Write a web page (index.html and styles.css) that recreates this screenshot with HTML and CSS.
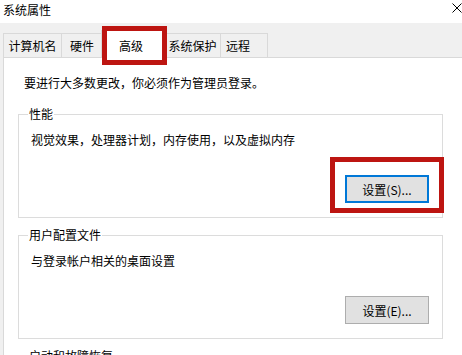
FILE: index.html
```html
<!DOCTYPE html>
<html lang="zh-CN">
<head>
    <meta charset="UTF-8">
    <title>系统属性</title>
    <link rel="stylesheet" href="styles.css">
</head>
<body>
    <div class="window">
        <div class="titlebar">
            <span class="title">系统属性</span>
            <svg class="close" width="10" height="10" viewBox="0 0 10 10">
                <path d="M0.5 0.5 L9.5 9.5 M9.5 0.5 L0.5 9.5" stroke="#000" stroke-width="1" fill="none"/>
            </svg>
        </div>

        <div class="tabs">
            <div class="tab tab-name">计算机名</div>
            <div class="tab tab-hw">硬件</div>
            <div class="tab tab-adv active">高级</div>
            <div class="tab tab-prot">系统保护</div>
            <div class="tab tab-remote">远程</div>
        </div>

        <div class="panel">
            <p class="notice">要进行大多数更改，你必须作为管理员登录。</p>

            <fieldset class="group">
                <legend>性能</legend>
                <p class="group-text">视觉效果，处理器计划，内存使用，以及虚拟内存</p>
                <div class="group-actions">
                    <span class="callout">
                        <button class="btn focused">设置(S)...</button>
                    </span>
                </div>
            </fieldset>

            <fieldset class="group">
                <legend>用户配置文件</legend>
                <p class="group-text">与登录帐户相关的桌面设置</p>
                <div class="group-actions">
                    <button class="btn">设置(E)...</button>
                </div>
            </fieldset>

            <fieldset class="group">
                <legend>启动和故障恢复</legend>
                <p class="group-text">系统启动、系统故障和调试信息</p>
            </fieldset>
        </div>
    </div>
</body>
</html>
```

FILE: styles.css
```css
body {
    margin: 0;
    background: #f0f0f0;
    font-family: "Noto Sans CJK SC", "Noto Sans", sans-serif;
    font-size: 12px;
    line-height: 16px;
    color: #000;
    overflow: hidden;
}

.window {
    width: 462px;
    height: 355px;
    overflow: hidden;
}

.titlebar {
    height: 23px;
    background: #fff;
    display: flex;
    justify-content: space-between;
    align-items: flex-start;
    padding-left: 3px;
    box-sizing: border-box;
}

.title {
    padding-top: 2px;
}

.close {
    margin-top: 3px;
}

.tabs {
    height: 34px;
    display: flex;
    align-items: flex-end;
    padding-left: 3px;
}

.tab {
    height: 24px;
    box-sizing: border-box;
    padding-top: 4px;
    border: 1px solid #d9d9d9;
    border-bottom: none;
    background: #f0f0f0;
    text-align: center;
    margin-left: -1px;
}

.tab-name {
    width: 59px;
    margin-left: 0;
}

.tab-hw {
    width: 42px;
}

.tab-adv {
    width: 64px;
}

.tab-prot {
    width: 57px;
}

.tab-remote {
    width: 48px;
    text-align: left;
    padding-left: 5px;
}

.tab.active {
    position: relative;
    z-index: 1;
    height: 28px;
    padding-top: 7px;
    margin-left: -2px;
    margin-bottom: -1px;
    background: #fff;
    padding-right: 4px;
}

.tab.active::after {
    content: "";
    position: absolute;
    top: -5px;
    left: 0;
    right: -3px;
    bottom: -7px;
    border: 5px solid #bd1511;
}

.panel {
    margin-left: 3px;
    border-left: 1px solid #d9d9d9;
    border-top: 1px solid #d9d9d9;
    background: #fff;
    padding: 17px 19px 0 14px;
    height: 400px;
}

.notice {
    margin: 0 0 15px 6px;
}

.group {
    margin: 0 0 9px 0;
    padding: 0 13px 14px 9px;
    border: 1px solid #dcdcdc;
    min-width: 0;
}

.group legend {
    padding: 0 1px;
}

.group-text {
    margin: 10px 0 0 3px;
}

.group-actions {
    display: flex;
    justify-content: flex-end;
    margin-top: 27px;
}

.callout {
    position: relative;
    display: flex;
}

.callout::after {
    content: "";
    position: absolute;
    top: -18px;
    left: -15px;
    right: -15px;
    bottom: -10px;
    border: 5px solid #bd1511;
}

.btn {
    width: 84px;
    height: 28px;
    box-sizing: border-box;
    background: #e1e1e1;
    border: 1px solid #adadad;
    font-family: inherit;
    font-size: 12px;
    color: #000;
    padding: 0;
    margin: 0;
}

.btn.focused {
    border: 2px solid #0078d7;
}
```
